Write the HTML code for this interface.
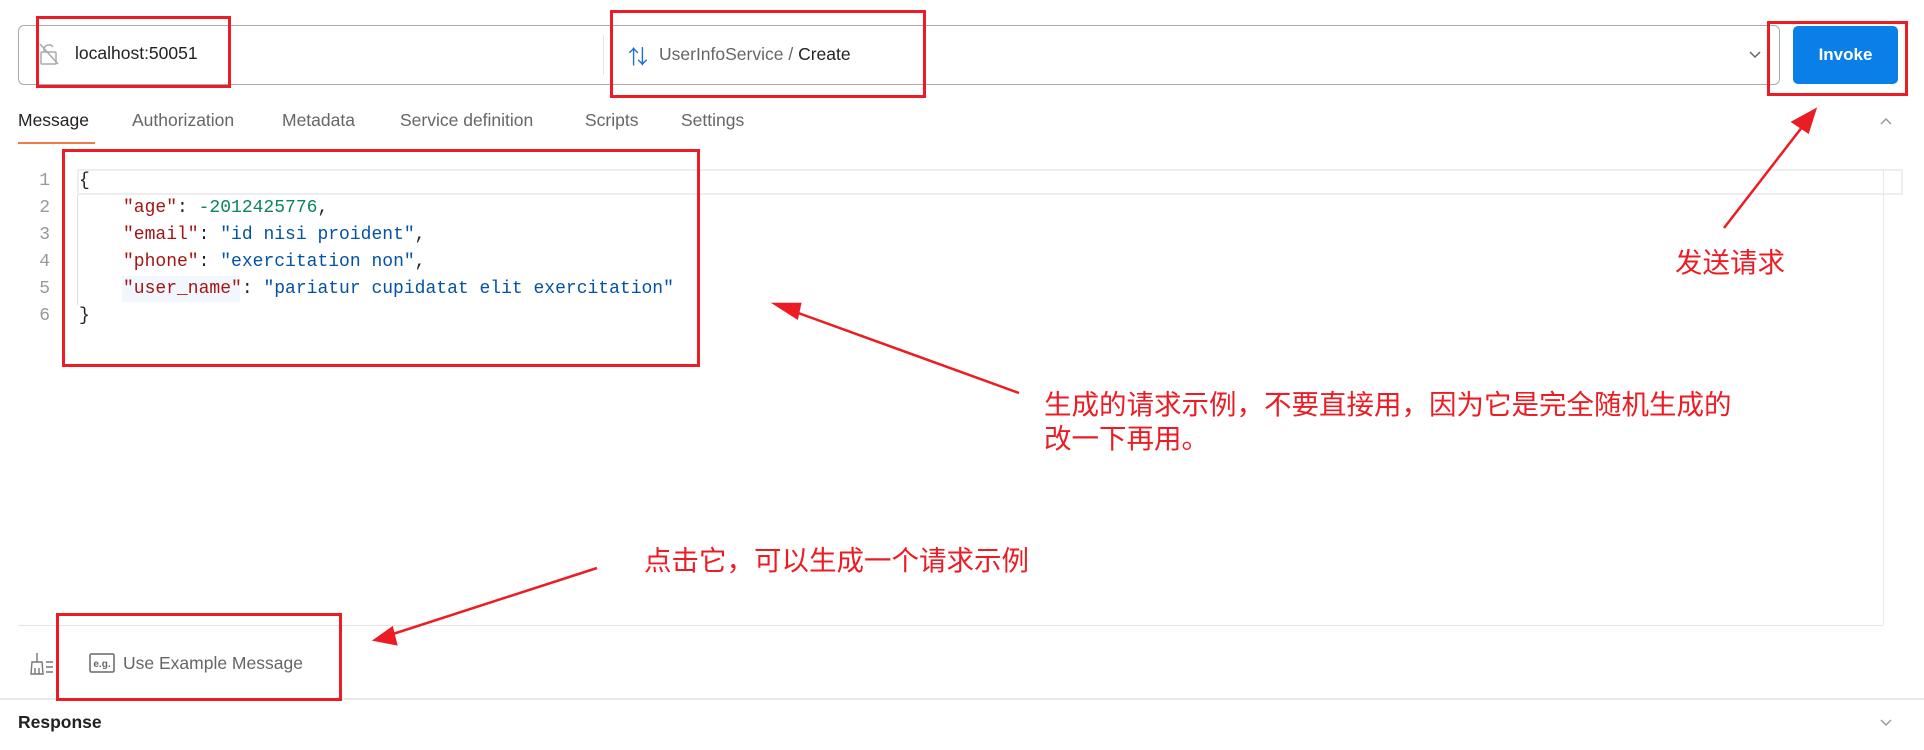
<!DOCTYPE html>
<html><head><meta charset="utf-8"><style>
*{margin:0;padding:0;box-sizing:border-box}
body{width:1924px;height:750px;background:#fff;position:relative;overflow:hidden;font-family:"Liberation Sans","Noto Sans CJK SC",sans-serif}
.a{position:absolute;white-space:nowrap}
.rb{position:absolute;border:3px solid #ec1c24}
.tab{position:absolute;top:110px;font-size:17.5px;color:#666}
.ln{position:absolute;left:36px;width:14px;text-align:right;color:#999;font-family:"Liberation Mono",monospace;font-size:18px}
.cd{position:absolute;font-family:"Liberation Mono",monospace;font-size:18px;color:#222;white-space:pre}
.k{color:#a31515}.s{color:#0451a5}.n{color:#098658}
.red{position:absolute;color:#ec1c24;font-size:27.5px;white-space:nowrap;font-family:"Noto Sans CJK SC",sans-serif;line-height:34px}
</style></head><body>
<div class="a" style="left:18px;top:25px;width:1762px;height:60px;border:1px solid #aaa;border-radius:6px"></div>
<div class="a" style="left:603px;top:35px;width:1px;height:40px;background:#e4e4e4"></div>
<svg class="a" style="left:38px;top:42px" width="22" height="24" viewBox="0 0 22 24" fill="none" stroke="#aaa" stroke-width="1.5"><rect x="3" y="10" width="15" height="12" rx="1"/><path d="M6 10V7a5 5 0 0 1 9-2"/><path d="M2 2l18 20"/></svg>
<div class="a" style="left:75px;top:43px;font-size:17.5px;color:#222">localhost:50051</div>
<div class="a" style="left:628px;top:41px;font-size:20px;color:#1a6fd6">⇅</div>
<div class="a" style="left:659px;top:44px;font-size:17.5px;color:#666">UserInfoService / <span style="color:#222">Create</span></div>
<svg class="a" style="left:1748px;top:50px" width="14" height="10" viewBox="0 0 14 10" fill="none" stroke="#666" stroke-width="1.5"><path d="M2 2l5 5 5-5"/></svg>
<div class="a" style="left:1793px;top:26px;width:105px;height:58px;background:#0b7fe8;border-radius:5px;color:#fff;font-weight:bold;font-size:17px;text-align:center;line-height:58px">Invoke</div>

<div class="tab" style="left:18px;color:#222">Message</div>
<div class="a" style="left:18px;top:142px;width:77px;height:2px;background:#f07a4a"></div>
<div class="tab" style="left:132px">Authorization</div>
<div class="tab" style="left:282px">Metadata</div>
<div class="tab" style="left:400px">Service definition</div>
<div class="tab" style="left:585px">Scripts</div>
<div class="tab" style="left:681px">Settings</div>
<svg class="a" style="left:1879px;top:116px" width="14" height="10" viewBox="0 0 14 10" fill="none" stroke="#999" stroke-width="1.5"><path d="M2 8l5-5 5 5"/></svg>

<div class="a" style="left:77px;top:169px;width:1826px;height:26px;border:2px solid #eee"></div>
<div class="a" style="left:1883px;top:169px;width:1px;height:456px;background:#e8e8e8"></div>
<div class="a" style="left:77px;top:195px;width:1px;height:110px;background:#ddd"></div>
<div class="a" style="left:18px;top:625px;width:1865px;height:1px;background:#e4e4e4"></div>
<div class="ln" style="top:171px">1</div><div class="ln" style="top:198px">2</div><div class="ln" style="top:225px">3</div><div class="ln" style="top:252px">4</div><div class="ln" style="top:279px">5</div><div class="ln" style="top:306px">6</div>
<div class="cd" style="left:79px;top:171px">{</div>
<div class="cd" style="left:123px;top:198px"><span class="k">"age"</span>: <span class="n">-2012425776</span>,</div>
<div class="cd" style="left:123px;top:225px"><span class="k">"email"</span>: <span class="s">"id nisi proident"</span>,</div>
<div class="cd" style="left:123px;top:252px"><span class="k">"phone"</span>: <span class="s">"exercitation non"</span>,</div>
<div class="a" style="left:122px;top:276px;width:118px;height:26px;background:#f2f7fd"></div>
<div class="cd" style="left:123px;top:279px"><span class="k">"user_name"</span>: <span class="s">"pariatur cupidatat elit exercitation"</span></div>
<div class="cd" style="left:79px;top:306px">}</div>

<svg class="a" style="left:28px;top:652px" width="28" height="24" viewBox="0 0 28 24" fill="none" stroke="#777" stroke-width="1.4"><path d="M9 1v9M4 10h10l1 12H3z M7 16v6M11 16v6"/><path d="M18 10h7M18 15h7M18 20h7"/></svg>
<svg class="a" style="left:89px;top:653px" width="26" height="20" viewBox="0 0 26 20"><rect x="1" y="1" width="24" height="18" rx="1.5" fill="none" stroke="#666" stroke-width="1.5"/><text x="13" y="14" font-size="10" font-family="Liberation Sans" fill="#666" text-anchor="middle" font-weight="bold">e.g.</text></svg>
<div class="a" style="left:123px;top:653px;font-size:17.5px;color:#666">Use Example Message</div>
<div class="a" style="left:0;top:698px;width:1924px;height:2px;background:#eaeaea"></div>
<div class="a" style="left:18px;top:712px;font-size:17.5px;font-weight:bold;color:#222">Response</div>
<svg class="a" style="left:1879px;top:718px" width="14" height="10" viewBox="0 0 14 10" fill="none" stroke="#999" stroke-width="1.5"><path d="M2 2l5 5 5-5"/></svg>

<div class="rb" style="left:36px;top:16px;width:195px;height:72px"></div>
<div class="rb" style="left:610px;top:10px;width:316px;height:88px"></div>
<div class="rb" style="left:1767px;top:21px;width:141px;height:75px"></div>
<div class="rb" style="left:62px;top:149px;width:638px;height:218px"></div>
<div class="rb" style="left:56px;top:613px;width:286px;height:88px"></div>

<svg class="a" style="left:0;top:0" width="1924" height="750">
<g fill="#ec1c24" stroke="#ec1c24" stroke-width="2.5">
<line x1="1724" y1="228" x2="1806" y2="122"/><polygon points="1815,110 1793,122 1808,132"/>
<line x1="1019" y1="393" x2="790" y2="310"/><polygon points="775,304 797,318 800,304"/>
<line x1="597" y1="568" x2="390" y2="635"/><polygon points="375,640 392,628 396,644"/>
</g></svg>
<div class="red" style="left:1675px;top:243px">发送请求</div>
<div class="red" style="left:1044px;top:385px">生成的请求示例，不要直接用，因为它是完全随机生成的</div>
<div class="red" style="left:1044px;top:419px">改一下再用。</div>
<div class="red" style="left:644px;top:541px">点击它，可以生成一个请求示例</div>
</body></html>
